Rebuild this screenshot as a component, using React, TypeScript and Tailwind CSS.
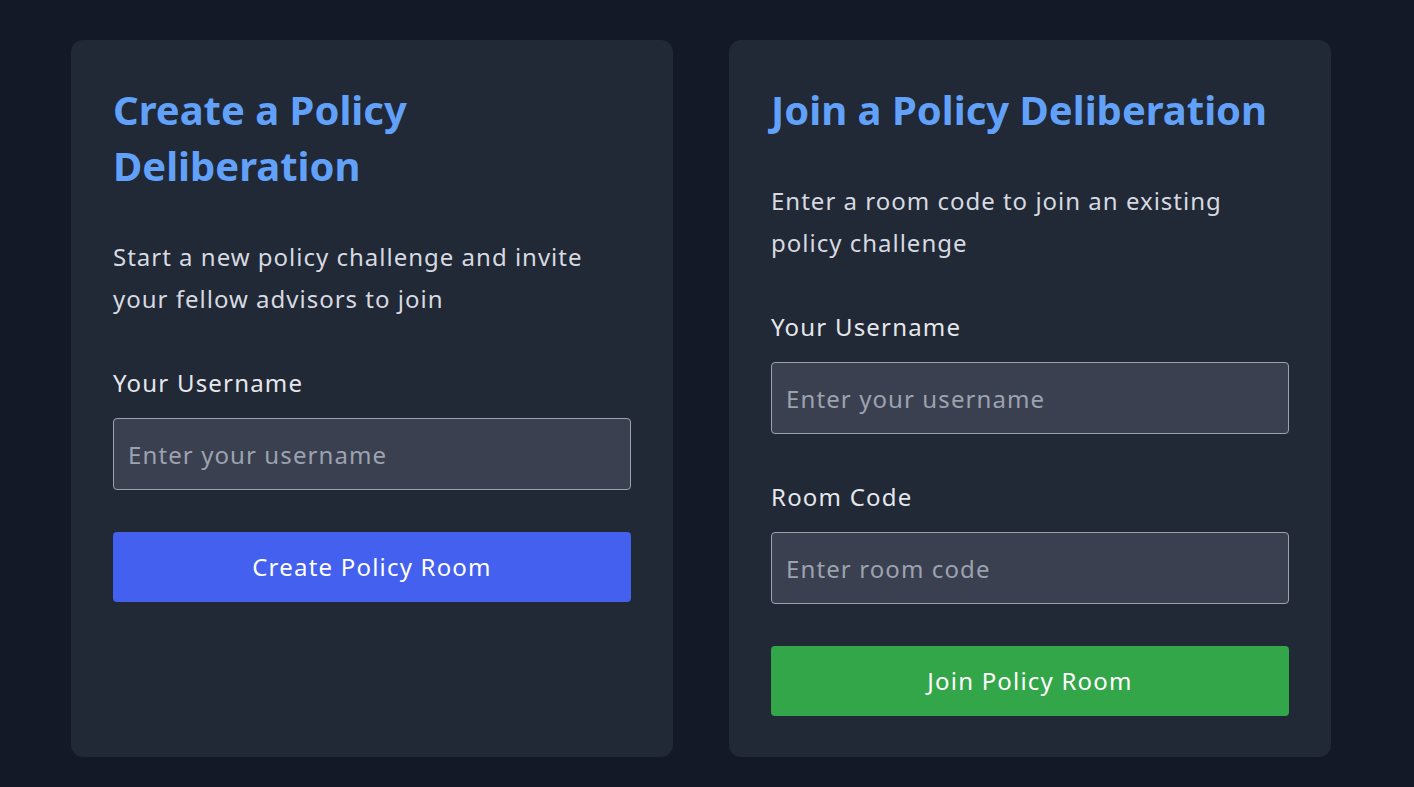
import React from "react";

const font = { fontFamily: '"Noto Sans", "Open Sans", sans-serif' };

function Field({ label, placeholder }: { label: string; placeholder: string }) {
  return (
    <div className="flex flex-col">
      <label className="text-[24px] leading-[42px] tracking-[1.2px] text-[#e5e7eb]">{label}</label>
      <input
        type="text"
        placeholder={placeholder}
        className="mt-[14px] h-[72px] w-full rounded-[4px] border border-[#9ca3af] bg-[#3a4050] px-[14px] text-[24px] tracking-[1.1px] text-[#e5e7eb] placeholder:text-[#9ca3af] outline-none"
      />
    </div>
  );
}

export default function App() {
  return (
    <div className="min-h-screen bg-[#131926] pl-[71px] pt-[40px] pb-[30px]" style={font}>
      <div className="grid w-[1260px] grid-cols-[602px_602px] gap-[56px]">
        <div className="flex flex-col rounded-[12px] bg-[#212836] px-[42px] pt-[42px] pb-[41px]">
          <h2 className="text-[40px] font-bold leading-[56px] text-[#62a1f9]">
            Create a Policy
            <br />
            Deliberation
          </h2>
          <p className="mt-[42px] text-[24px] leading-[42px] tracking-[1px] text-[#d7dae0]">
            Start a new policy challenge and invite your fellow advisors to join
          </p>
          <div className="mt-[42px]">
            <Field label="Your Username" placeholder="Enter your username" />
          </div>
          <button className="mt-[42px] h-[70px] w-full rounded-[4px] bg-[#4361ee] text-[24px] tracking-[1.2px] text-white">
            Create Policy Room
          </button>
        </div>

        <div className="flex flex-col rounded-[12px] bg-[#212836] px-[42px] pt-[42px] pb-[41px]">
          <h2 className="text-[40px] font-bold leading-[56px] text-[#62a1f9]">Join a Policy Deliberation</h2>
          <p className="mt-[42px] text-[24px] leading-[42px] tracking-[1px] text-[#d7dae0]">
            Enter a room code to join an existing policy challenge
          </p>
          <div className="mt-[42px] flex flex-col gap-[42px]">
            <Field label="Your Username" placeholder="Enter your username" />
            <Field label="Room Code" placeholder="Enter room code" />
          </div>
          <button className="mt-[42px] h-[70px] w-full rounded-[4px] bg-[#34a64a] text-[24px] tracking-[1.2px] text-white">
            Join Policy Room
          </button>
        </div>
      </div>
    </div>
  );
}
